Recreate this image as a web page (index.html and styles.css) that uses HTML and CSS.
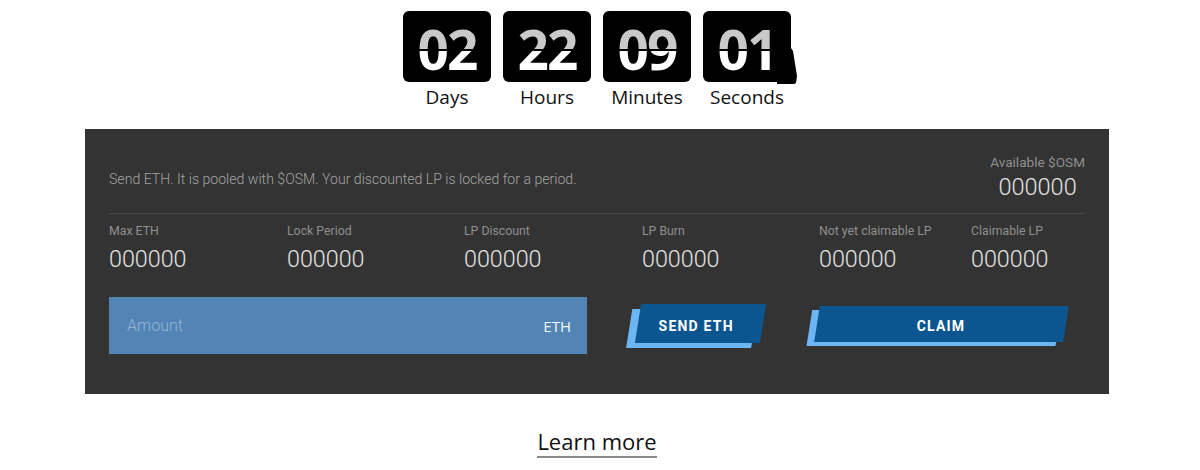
FILE: index.html
```html
<!DOCTYPE html>
<html>
<head>
<meta charset="utf-8">
<link rel="stylesheet" href="styles.css">
</head>
<body>
<div class="page">
  <div class="countdown">
    <div class="unit">
      <div class="box"><span class="digits">02</span></div>
      <div class="label">Days</div>
    </div>
    <div class="unit">
      <div class="box"><span class="digits">22</span></div>
      <div class="label">Hours</div>
    </div>
    <div class="unit">
      <div class="box"><span class="digits">09</span></div>
      <div class="label">Minutes</div>
    </div>
    <div class="unit">
      <div class="box box-flip"><span class="digits">01</span></div>
      <div class="label">Seconds</div>
    </div>
  </div>

  <div class="panel">
    <div class="panel-head">
      <p class="desc">Send ETH. It is pooled with $OSM. Your discounted LP is locked for a period.</p>
      <div class="available">
        <div class="avail-label">Available $OSM</div>
        <div class="avail-value">000000</div>
      </div>
    </div>
    <div class="stats">
      <div class="stat"><div class="stat-label">Max ETH</div><div class="stat-value">000000</div></div>
      <div class="stat"><div class="stat-label">Lock Period</div><div class="stat-value">000000</div></div>
      <div class="stat"><div class="stat-label">LP Discount</div><div class="stat-value">000000</div></div>
      <div class="stat"><div class="stat-label">LP Burn</div><div class="stat-value">000000</div></div>
      <div class="stat"><div class="stat-label">Not yet claimable LP</div><div class="stat-value">000000</div></div>
      <div class="stat"><div class="stat-label">Claimable LP</div><div class="stat-value">000000</div></div>
    </div>
    <div class="actions">
      <label class="amount">
        <input class="amount-input" type="text" placeholder="Amount">
        <span class="amount-unit">ETH</span>
      </label>
      <button class="btn btn-send"><span>SEND ETH</span></button>
      <button class="btn btn-claim"><span>CLAIM</span></button>
    </div>
  </div>

  <div class="more">
    <a class="more-link" href="#">Learn more</a>
  </div>
</div>
</body>
</html>
```

FILE: styles.css
```css
* { box-sizing: border-box; }

html, body {
  margin: 0;
  padding: 0;
  background: #ffffff;
}

body {
  font-family: Roboto, "Liberation Sans", sans-serif;
}

.page {
  width: 1200px;
  padding: 11px 6px 0 0;
}

/* Countdown */
.countdown {
  display: flex;
  justify-content: center;
  gap: 12px;
}

.unit {
  display: flex;
  flex-direction: column;
  align-items: center;
}

.box {
  position: relative;
  width: 88px;
  height: 71px;
  background: #000;
  border-radius: 6px;
}

.box::after {
  content: "";
  position: absolute;
  z-index: 2;
  left: 0;
  right: 0;
  top: 38px;
  height: 2px;
  background: #000;
}

.box-flip::before {
  content: "";
  position: absolute;
  right: -6px;
  top: 37px;
  width: 20px;
  height: 36px;
  background: #000;
  clip-path: polygon(0 0, 14px 0, 16px 3px, 20px 28px, 19px 35px, 17px 36px, 0 36px);
}

.digits {
  position: relative;
  z-index: 1;
  display: block;
  height: 71px;
  text-align: center;
  font-family: "Open Sans", sans-serif;
  font-weight: 700;
  font-size: 55px;
  line-height: 71px;
  letter-spacing: -2px;
  padding-top: 2px;
  background: linear-gradient(to bottom, #c9c9c9 0, #c9c9c9 39px, #ffffff 39px, #ffffff 100%);
  -webkit-background-clip: text;
  background-clip: text;
  color: transparent;
}

.label {
  font-family: "Open Sans", sans-serif;
  font-size: 19px;
  line-height: 28px;
  color: #111;
  margin-top: 1px;
}

/* Panel */
.panel {
  width: 1024px;
  margin: 18px auto 0;
  background: #333333;
  padding: 25px 24px 40px;
}

.panel-head {
  display: flex;
  justify-content: space-between;
  align-items: center;
  padding-bottom: 12px;
  border-bottom: 1px solid #484848;
}

.desc {
  margin: 2px 0 0;
  font-size: 14.1px;
  font-weight: 300;
  color: #a3a3a3;
}

.available {
  text-align: center;
}

.avail-label {
  font-size: 13.6px;
  line-height: 16px;
  color: #8f8f8f;
}

.avail-value {
  font-size: 23.5px;
  font-weight: 300;
  line-height: 28px;
  color: #e2e2e2;
  margin-top: 3px;
}

.stats {
  display: grid;
  grid-template-columns: 178px 177px 178px 177px 152px 1fr;
  padding-top: 10px;
}

.stat-label {
  font-size: 12.3px;
  line-height: 15px;
  color: #8f8f8f;
}

.stat-value {
  font-size: 23.3px;
  font-weight: 300;
  line-height: 28px;
  color: #e2e2e2;
  margin-top: 6px;
}

/* Actions */
.actions {
  display: flex;
  align-items: center;
  margin-top: 24px;
}

.amount {
  display: flex;
  align-items: center;
  width: 478px;
  height: 57px;
  background: #5285b5;
  padding: 0 16px 0 18px;
}

.amount-input {
  flex: 1;
  min-width: 0;
  border: 0;
  outline: 0;
  background: transparent;
  font-family: Roboto, sans-serif;
  font-weight: 300;
  font-size: 16px;
  color: #fff;
  padding: 0;
}

.amount-input::placeholder {
  color: #94b4d4;
}

.amount-unit {
  font-family: "Open Sans", sans-serif;
  font-size: 15px;
  color: #f4f7fa;
}

.btn {
  border: 0;
  padding: 4px 0 0;
  background: #0b5690;
  color: #fff;
  font-family: Roboto, sans-serif;
  font-weight: 700;
  font-size: 14px;
  letter-spacing: 1.2px;
  transform: skewX(-9deg);
  cursor: pointer;
}

.btn span {
  display: inline-block;
  transform: skewX(9deg);
}

.btn-send {
  width: 125px;
  height: 39px;
  margin-left: 51px;
  margin-top: -4px;
  box-shadow: -8px 5px 0 #6cb6f3;
}

.btn-send span {
  margin-left: -8px;
}

.btn-claim {
  width: 249px;
  height: 36px;
  margin-left: 54px;
  margin-top: -4px;
  box-shadow: -7px 4px 0 #6cb6f3;
}

/* Learn more */
.more {
  text-align: center;
  margin-top: 33px;
}

.more-link {
  display: inline-block;
  font-family: "Open Sans", sans-serif;
  font-size: 22px;
  line-height: 28px;
  color: #111;
  text-decoration: none;
  border-bottom: 2px solid #8a8a8a;
  padding-bottom: 1px;
}
```
